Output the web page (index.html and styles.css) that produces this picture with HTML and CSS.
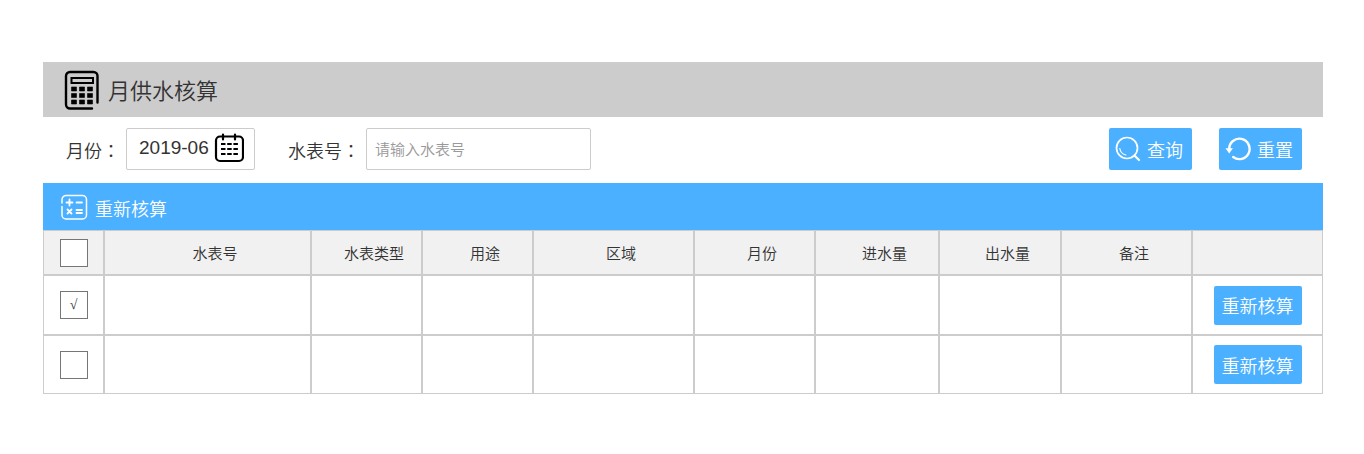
FILE: index.html
```
<!DOCTYPE html>
<html lang="zh-CN">
<head>
<meta charset="utf-8">
<title>月供水核算</title>
<link rel="stylesheet" href="styles.css">
</head>
<body>
<main class="panel">
  <header class="panel-header">
    <svg class="icon-calculator" viewBox="0 0 36 40" aria-hidden="true">
      <path d="M33.500 32.500V6a4 4 0 0 0-4-4H6a4 4 0 0 0-4 4v28.500a4 4 0 0 0 4 4h22" fill="none" stroke="#000" stroke-width="2.400" stroke-linecap="round"/>
      <rect x="7.500" y="8" width="21.500" height="5" fill="none" stroke="#000" stroke-width="2"/>
      <path d="M7.500 17h5v4h-5zM15.500 17h5v4h-5zM23.500 17h5v4h-5zM7.500 23.500h5v4h-5zM15.500 23.500h5v4h-5zM23.500 23.500h5v4h-5zM7.500 30h5v4h-5zM15.500 30h5v4h-5zM23.500 30h5v4h-5z" stroke="#000" stroke-width=".6"/>
    </svg>
    <h1 class="panel-title">月供水核算</h1>
  </header>

  <form class="filters">
    <div class="field">
      <label class="field-label" for="month">月份<span class="colon" lang="zh-TW">：</span></label>
      <div class="month-box">
        <input class="month-input" id="month" type="text" value="2019-06">
        <button class="month-picker" type="button" aria-label="选择月份">
          <svg class="icon-calendar" viewBox="0 0 30 30" aria-hidden="true">
            <g fill="none" stroke="#000" stroke-width="2.200" stroke-linecap="round">
              <rect x="2" y="3.500" width="27" height="24.500" rx="4"/>
              <path d="M9 1.500v5M21 1.500v5"/>
            </g>
            <path d="M7 11h4.500M13.200 11h4.500M19.400 11h4.500M7 16h4.500M13.200 16h4.500M19.400 16h4.500M7 21h4.500M13.200 21h4.500M19.400 21h4.500" stroke="#000" stroke-width="2"/>
          </svg>
        </button>
      </div>
    </div>
    <div class="field">
      <label class="field-label" for="meter">水表号<span class="colon" lang="zh-TW">：</span></label>
      <input class="meter-input" id="meter" type="text" placeholder="请输入水表号">
    </div>
    <div class="actions">
      <button class="btn btn-action" type="button">
        <svg class="icon-action" viewBox="0 0 26 26" fill="none" stroke="#fff" aria-hidden="true">
          <circle cx="12" cy="12" r="10.500" stroke-width="1.700"/>
          <path d="M19.500 19.500l4.500 4.500" stroke-width="2.200" stroke-linecap="round"/>
          <path d="M4.800 12.500a8 8 0 0 0 6 6.500" stroke-width="1.200" stroke-linecap="round"/>
        </svg>
        查询
      </button>
      <button class="btn btn-action" type="button">
        <svg class="icon-action" viewBox="0 0 26 26" fill="none" stroke="#fff" aria-hidden="true">
          <path d="M4.200 13a10.200 10.200 0 1 1 4 8" stroke-width="2.400" stroke-linecap="round"/>
          <path d="M.500 12.200h7.400L4.200 17.500z" fill="#fff" stroke="none"/>
        </svg>
        重置
      </button>
    </div>
  </form>

  <div class="toolbar">
    <button class="toolbar-button" type="button">
      <svg class="icon-recalc" viewBox="0 0 28 28" fill="none" stroke="#fff" stroke-width="1.500" stroke-linecap="round" aria-hidden="true">
        <path d="M2 9V5.500a4 4 0 0 1 4-4h16.500a4 4 0 0 1 4 4v15.500a4 4 0 0 1-4 4H6a4 4 0 0 1-4-4v-8.500"/>
        <path d="M6.500 8.500h6M9.500 5.500v6M16.500 8.500h5.500M7.500 15.500l4 4M11.500 15.500l-4 4M16.500 16h5.500M16.500 19h5.500" stroke-width="1.800"/>
      </svg>
      重新核算
    </button>
  </div>

  <table class="grid">
    <colgroup>
      <col class="col-check"><col class="col-meter"><col class="col-type"><col class="col-type"><col class="col-area">
      <col class="col-month"><col class="col-in"><col class="col-out"><col class="col-note"><col class="col-note">
    </colgroup>
    <thead>
      <tr>
        <th class="cell-check"><input class="check" type="checkbox" aria-label="全选"></th>
        <th>水表号</th><th>水表类型</th><th>用途</th><th>区域</th><th>月份</th><th>进水量</th><th>出水量</th><th>备注</th><th></th>
      </tr>
    </thead>
    <tbody>
      <tr>
        <td class="cell-check"><input class="check" type="checkbox" aria-label="选择第1行" checked></td>
        <td></td><td></td><td></td><td></td><td></td><td></td><td></td><td></td>
        <td><button class="btn btn-row" type="button">重新核算</button></td>
      </tr>
      <tr>
        <td class="cell-check"><input class="check" type="checkbox" aria-label="选择第2行"></td>
        <td></td><td></td><td></td><td></td><td></td><td></td><td></td><td></td>
        <td><button class="btn btn-row" type="button">重新核算</button></td>
      </tr>
    </tbody>
  </table>
</main>
</body>
</html>
```

FILE: styles.css
```
* {
  box-sizing: border-box;
}

body {
  margin: 0;
  background: #fff;
  color: #333;
  font-family: "Liberation Sans", "Noto Sans CJK SC", sans-serif;
  font-size: 18px;
  font-weight: 350;
}

button,
input {
  margin: 0;
  padding: 0;
  font: inherit;
  color: inherit;
}

button {
  border: 0;
  background: none;
  cursor: pointer;
}

svg {
  display: block;
  flex: none;
}

.panel {
  padding: 62px 41px 60px 43px;
}

.panel-header {
  display: flex;
  align-items: center;
  gap: 8px;
  min-height: 55px;
  padding: 0 21px;
  background: #ccc;
}

.icon-calculator {
  width: 36px;
  height: 40px;
}

.panel-title {
  margin: 0;
  padding-top: 4px;
  font-size: 22px;
  font-weight: inherit;
  line-height: 32px;
}

.filters {
  display: flex;
  align-items: center;
  gap: 33px;
  min-height: 66px;
  padding: 0 21px 2px 23px;
}

.field {
  display: flex;
  align-items: center;
  gap: 6px;
}

.field-label {
  padding-top: 4px;
  line-height: 24px;
  white-space: nowrap;
}

.colon {
  font-family: "Noto Sans CJK TC", sans-serif;
}

.month-box {
  display: flex;
  align-items: center;
  width: 129px;
  height: 42px;
  padding: 0 10px 2px 12px;
  border: 1px solid #ccc;
  border-radius: 2px;
}

.month-input {
  flex: 1;
  min-width: 0;
  border: 0;
  outline: 0;
  background: none;
  font-size: 19px;
}

.icon-calendar {
  width: 30px;
  height: 30px;
}

.meter-input {
  width: 225px;
  height: 42px;
  padding: 0 8px;
  border: 1px solid #ccc;
  border-radius: 2px;
  font-size: 15px;
}

.meter-input::placeholder {
  color: #999;
}

.actions {
  display: flex;
  gap: 27px;
  margin-left: auto;
}

.btn {
  border-radius: 2px;
  background: #4bb0ff;
  color: #fff;
  white-space: nowrap;
}

.btn-action {
  display: flex;
  align-items: center;
  gap: 6px;
  height: 42px;
  padding: 0 9px 0 6px;
}

.icon-action {
  width: 26px;
  height: 26px;
}

.toolbar {
  display: flex;
  align-items: center;
  min-height: 47px;
  padding: 2px 17px 0;
  background: #4bb0ff;
}

.toolbar-button {
  display: flex;
  align-items: center;
  gap: 7px;
  color: #fff;
}

.icon-recalc {
  width: 28px;
  height: 28px;
}

.grid {
  width: 100%;
  border-collapse: separate;
  border-spacing: 0;
  table-layout: fixed;
}

.col-check { width: 61px; }
.col-meter { width: 207px; }
.col-type { width: 111px; }
.col-area { width: 161px; }
.col-month { width: 121px; }
.col-in { width: 124px; }
.col-out { width: 122px; }
.col-note { width: 131px; }

.grid th,
.grid td {
  padding: 0;
  border: 1px solid #ccc;
  text-align: center;
  vertical-align: middle;
}

.grid th {
  height: 45px;
  padding-left: 15px;
  background: #f1f1f1;
  font-size: 15px;
  font-weight: inherit;
}

.grid .cell-check {
  padding: 0;
}

.grid td {
  height: 60px;
}

.grid tr:last-child td {
  height: 59px;
}

.check {
  display: grid;
  place-items: center;
  width: 28px;
  height: 28px;
  margin: 0 auto;
  appearance: none;
  border: 1px solid #767676;
  background: #fff;
}

.check:checked::before {
  content: "√";
  font-family: "Liberation Serif", serif;
  font-size: 14px;
  line-height: 14px;
}

.btn-row {
  height: 39px;
  padding: 0 8px;
}
```
